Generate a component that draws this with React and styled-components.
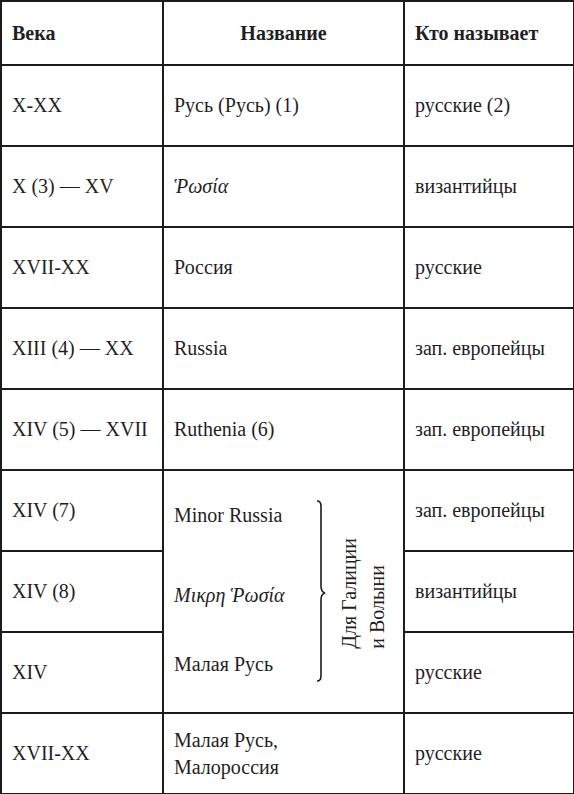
import React from 'react';
import styled, { createGlobalStyle } from 'styled-components';

const GlobalStyle = createGlobalStyle`
  html, body {
    margin: 0;
    padding: 0;
    background: #ffffff;
  }
  body {
    font-family: 'Liberation Serif', 'Times New Roman', serif;
    color: #1f1f1f;
  }
`;

const Table = styled.table`
  width: 573px;
  border-collapse: collapse;
  table-layout: fixed;
  font-family: 'Liberation Serif', 'Times New Roman', serif;
  font-size: 20px;
  line-height: 27px;
  color: #1f1f1f;
`;

const HeadRow = styled.tr`
  height: 64px;
`;

const Row = styled.tr`
  height: 81px;
`;

const HeadCell = styled.th`
  border: 2px solid #1c1c1c;
  padding: 0 10px;
  font-weight: bold;
  font-size: 20px;
  text-align: ${p => (p.$center ? 'center' : 'left')};
  vertical-align: middle;
`;

const Cell = styled.td`
  border: 2px solid #1c1c1c;
  padding: 0 10px;
  vertical-align: middle;
  text-align: left;
  font-style: ${p => (p.$italic ? 'italic' : 'normal')};
`;

const MergedCell = styled.td`
  border: 2px solid #1c1c1c;
  padding: 0 12px 0 10px;
  vertical-align: top;
`;

const MergedInner = styled.div`
  display: flex;
  align-items: center;
  height: 240px;
`;

const NameList = styled.div`
  flex: 1;
  align-self: stretch;
  display: flex;
  flex-direction: column;
  padding-top: 31px;
`;

const Name = styled.div`
  margin-top: ${p => p.$top || 0}px;
  font-style: ${p => (p.$italic ? 'italic' : 'normal')};
`;

const Brace = styled.svg`
  width: 10px;
  height: 182px;
  margin: 0 9px 0 0;
  flex: none;
`;

const VerticalNote = styled.div`
  writing-mode: vertical-rl;
  transform: rotate(180deg);
  line-height: 28px;
  text-align: left;
  margin-top: 4px;
`;

const rows = [
  { age: 'X-XX', name: 'Русь (Русь) (1)', who: 'русские (2)' },
  { age: 'X (3) — XV', name: 'Ῥωσία', italic: true, who: 'византийцы' },
  { age: 'XVII-XX', name: 'Россия', who: 'русские' },
  { age: 'XIII (4) — XX', name: 'Russia', who: 'зап. европейцы' },
  { age: 'XIV (5) — XVII', name: 'Ruthenia (6)', who: 'зап. европейцы' },
];

export default function App() {
  return (
    <>
      <GlobalStyle />
      <Table>
        <colgroup>
          <col style={{ width: 162 }} />
          <col style={{ width: 241 }} />
          <col style={{ width: 170 }} />
        </colgroup>
        <thead>
          <HeadRow>
            <HeadCell>Века</HeadCell>
            <HeadCell $center>Название</HeadCell>
            <HeadCell>Кто называет</HeadCell>
          </HeadRow>
        </thead>
        <tbody>
          {rows.map(r => (
            <Row key={r.age}>
              <Cell>{r.age}</Cell>
              <Cell $italic={r.italic}>{r.name}</Cell>
              <Cell>{r.who}</Cell>
            </Row>
          ))}
          <Row>
            <Cell>XIV (7)</Cell>
            <MergedCell rowSpan={3}>
              <MergedInner>
                <NameList>
                  <Name>Minor Russia</Name>
                  <Name $italic $top={53}>Μικρη Ῥωσία</Name>
                  <Name $top={42}>Малая Русь</Name>
                </NameList>
                <Brace viewBox="0 0 10 182" fill="none" stroke="#1c1c1c" strokeWidth="1.6">
                  <path d="M1 1 Q5 1 5 6 L5 86 Q5 92 9 93 Q5 94 5 100 L5 176 Q5 181 1 181" />
                </Brace>
                <VerticalNote>
                  Для Галиции<br />и Волыни
                </VerticalNote>
              </MergedInner>
            </MergedCell>
            <Cell>зап. европейцы</Cell>
          </Row>
          <Row>
            <Cell>XIV (8)</Cell>
            <Cell>византийцы</Cell>
          </Row>
          <Row>
            <Cell>XIV</Cell>
            <Cell>русские</Cell>
          </Row>
          <Row>
            <Cell>XVII-XX</Cell>
            <Cell>Малая Русь,<br />Малороссия</Cell>
            <Cell>русские</Cell>
          </Row>
        </tbody>
      </Table>
    </>
  );
}
